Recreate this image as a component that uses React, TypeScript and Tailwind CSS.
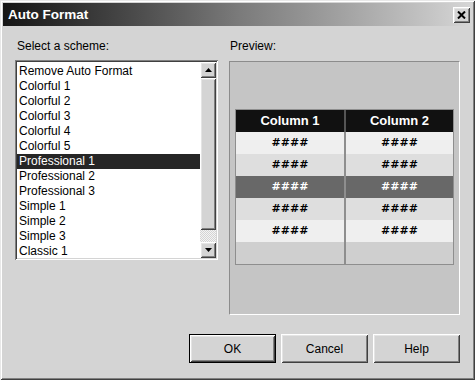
const schemes = [
  "Remove Auto Format",
  "Colorful 1",
  "Colorful 2",
  "Colorful 3",
  "Colorful 4",
  "Colorful 5",
  "Professional 1",
  "Professional 2",
  "Professional 3",
  "Simple 1",
  "Simple 2",
  "Simple 3",
  "Classic 1",
];

const previewRows = [
  { bg: "bg-[#efefef]", color: "text-black", value: "####" },
  { bg: "bg-[#dedede]", color: "text-black", value: "####" },
  { bg: "bg-[#686868]", color: "text-white", value: "####" },
  { bg: "bg-[#dedede]", color: "text-black", value: "####" },
  { bg: "bg-[#efefef]", color: "text-black", value: "####" },
  { bg: "bg-[#cfcfcf]", color: "text-black", value: "" },
];

const raised =
  "bg-[#d4d4d4] shadow-[inset_1px_1px_0_#ffffff,inset_-1px_-1px_0_#404040,inset_2px_2px_0_#e4e4e4,inset_-2px_-2px_0_#808080]";

function Arrow({ down }: { down?: boolean }) {
  return (
    <svg width="7" height="4" viewBox="0 0 7 4">
      <path d={down ? "M0 0h7L3.5 4z" : "M3.5 0L7 4H0z"} fill="#000" />
    </svg>
  );
}

function Button({ label, isDefault }: { label: string; isDefault?: boolean }) {
  return (
    <div
      className={`flex h-[29px] w-[87px] items-center justify-center text-[12px] text-black ${
        isDefault ? "border border-black" : ""
      } ${raised}`}
    >
      {label}
    </div>
  );
}

export default function App() {
  return (
    <div className="h-[380px] w-[475px] bg-white font-['Liberation_Sans',Arial,sans-serif]">
      <div className="flex h-[380px] w-[475px] flex-col bg-[#d4d4d4] p-[3px] shadow-[inset_1px_1px_0_#e8e8e8,inset_-1px_-1px_0_#404040,inset_2px_2px_0_#ffffff,inset_-2px_-2px_0_#808080]">
        <div className="flex h-[23px] items-center justify-between bg-linear-to-r from-[#161616] via-[#7a7a7a] to-[#d6d6d6] pl-[5px] pr-[2px]">
          <span className="pt-[2px] text-[13.5px] font-bold text-white">Auto Format</span>
          <div className={`flex h-[16px] w-[17px] items-center justify-center ${raised}`}>
            <svg width="9" height="8" viewBox="0 0 9 8">
              <path d="M1 0.5l7 7M8 0.5l-7 7" stroke="#000" strokeWidth="2" />
            </svg>
          </div>
        </div>

        <div className="flex flex-1 flex-col px-[12px] pt-[13px]">
          <div className="flex gap-[11px]">
            <div className="w-[203px]">
              <div className="mb-[6px] h-[15px] pl-[2px] text-[12px] leading-[15px] text-black">
                Select a scheme:
              </div>
              <div className="flex h-[200px] bg-white p-[2px] shadow-[inset_1px_1px_0_#808080,inset_-1px_-1px_0_#ffffff,inset_2px_2px_0_#404040,inset_-2px_-2px_0_#d4d4d4]">
                <div className="flex-1 overflow-hidden pt-[2px]">
                  {schemes.map((s) => (
                    <div
                      key={s}
                      className={`h-[15px] pl-[2px] text-[12px] leading-[15px] ${
                        s === "Professional 1" ? "bg-[#262626] text-white" : "text-black"
                      }`}
                    >
                      {s}
                    </div>
                  ))}
                </div>
                <div className="flex w-[16px] flex-col">
                  <div className={`flex h-[16px] items-center justify-center ${raised}`}>
                    <Arrow />
                  </div>
                  <div className={`h-[152px] ${raised}`} />
                  <div className="flex-1 bg-[repeating-conic-gradient(#f4f4f4_0%_25%,#d4d4d4_0%_50%)] bg-[length:2px_2px]" />
                  <div className={`flex h-[16px] items-center justify-center ${raised}`}>
                    <Arrow down />
                  </div>
                </div>
              </div>
            </div>

            <div className="w-[231px]">
              <div className="h-[15px] pl-[1px] text-[12px] leading-[15px] text-black">Preview:</div>
              <div className="mt-[7px] h-[254px] border border-[#8c8c8c] border-r-white border-b-white bg-[#c5c5c5]">
                <div className="mx-[5px] mt-[47px] border border-[#8e8e8e]">
                  <div className="flex h-[22px] bg-[#111111] text-[13px] font-bold text-white">
                    <div className="flex w-[108px] items-center justify-center">Column 1</div>
                    <div className="flex flex-1 items-center justify-center border-l-2 border-[#555555]">
                      Column 2
                    </div>
                  </div>
                  {previewRows.map((r, i) => (
                    <div
                      key={i}
                      className={`flex h-[22px] font-['DejaVu_Sans',sans-serif] text-[11px] font-bold ${r.bg} ${r.color}`}
                    >
                      <div className="flex w-[108px] items-center justify-center">{r.value}</div>
                      <div className="flex flex-1 items-center justify-center border-l-2 border-[#8e8e8e]">
                        {r.value}
                      </div>
                    </div>
                  ))}
                </div>
              </div>
            </div>
          </div>

          <div className="mt-[19px] flex justify-end gap-[5px]">
            <Button label="OK" isDefault />
            <Button label="Cancel" />
            <Button label="Help" />
          </div>
        </div>
      </div>
    </div>
  );
}
